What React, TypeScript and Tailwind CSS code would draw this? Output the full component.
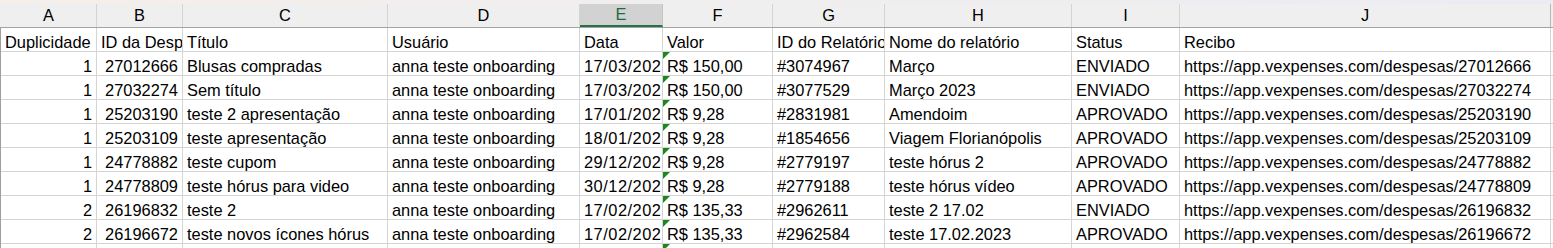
const cols = [
  { key: "A", w: "w-[96px]" },
  { key: "B", w: "w-[86px]" },
  { key: "C", w: "w-[205px]" },
  { key: "D", w: "w-[192px]" },
  { key: "E", w: "w-[83px]" },
  { key: "F", w: "w-[110px]" },
  { key: "G", w: "w-[112px]" },
  { key: "H", w: "w-[187px]" },
  { key: "I", w: "w-[108px]" },
  { key: "J", w: "w-[371px]" },
];

const header = [
  "Duplicidade",
  "ID da Despesa",
  "Título",
  "Usuário",
  "Data",
  "Valor",
  "ID do Relatório",
  "Nome do relatório",
  "Status",
  "Recibo",
];

const rows = [
  ["1", "27012666", "Blusas compradas", "17/03/2023", "R$ 150,00", "#3074967", "Março", "ENVIADO"],
  ["1", "27032274", "Sem título", "17/03/2023", "R$ 150,00", "#3077529", "Março 2023", "ENVIADO"],
  ["1", "25203190", "teste 2 apresentação", "17/01/2023", "R$ 9,28", "#2831981", "Amendoim", "APROVADO"],
  ["1", "25203109", "teste apresentação", "18/01/2023", "R$ 9,28", "#1854656", "Viagem Florianópolis", "APROVADO"],
  ["1", "24778882", "teste cupom", "29/12/2022", "R$ 9,28", "#2779197", "teste hórus 2", "APROVADO"],
  ["1", "24778809", "teste hórus para video", "30/12/2022", "R$ 9,28", "#2779188", "teste hórus vídeo", "APROVADO"],
  ["2", "26196832", "teste 2", "17/02/2023", "R$ 135,33", "#2962611", "teste 2 17.02", "ENVIADO"],
  ["2", "26196672", "teste novos ícones hórus", "17/02/2023", "R$ 135,33", "#2962584", "teste 17.02.2023", "APROVADO"],
];

function Cell({
  w,
  children,
  right,
  flag,
  extra = "",
}: {
  w: string;
  children?: React.ReactNode;
  right?: boolean;
  flag?: boolean;
  extra?: string;
}) {
  return (
    <div
      className={`relative h-full shrink-0 overflow-hidden whitespace-nowrap border-r border-[#d4d4d4] pt-[4px] leading-[20px] ${w} ${
        right ? "pr-[4px] text-right" : "pl-[4px]"
      } ${extra}`}
    >
      {flag && (
        <svg className="absolute left-0 top-0" width="7" height="7" viewBox="0 0 7 7">
          <polygon points="0,0 7,0 0,7" fill="#1a8a1a" />
        </svg>
      )}
      {children}
    </div>
  );
}

export default function App() {
  return (
    <div className="h-[248px] w-[1553px] overflow-hidden bg-white font-['Liberation_Sans',Arial,sans-serif] text-[16.4px] text-black">
      {/* top edge of the ribbon */}
      <div className="h-[4px] bg-gradient-to-r from-[#f5efeb] to-[#ebecf2]" />

      {/* column letters */}
      <div className="flex h-[24px] border-b border-[#a3a3a3] bg-[#efefef]">
        <div className="w-[1px] shrink-0" />
        {cols.map((c) => (
          <div
            key={c.key}
            className={`flex h-full shrink-0 items-center justify-center border-r ${c.w} ${
              c.key === "E"
                ? "border-[#c4c4c4] border-b-2 border-b-[#217346] bg-[#d2d2d2] text-[#1e6b41]"
                : c.key === "J"
                  ? "border-[#b5b5b5]"
                  : "border-[#d4d4d4]"
            }`}
          >
            {c.key}
          </div>
        ))}
        <div className="flex-1" />
      </div>

      {/* sheet body */}
      <div className="border-l border-[#9e9e9e]">
        <div className="flex h-[24px] border-b border-[#d4d4d4]">
          {cols.map((c, i) => (
            <Cell key={c.key} w={c.w}>
              {header[i]}
            </Cell>
          ))}
        </div>

        {rows.map((r) => (
          <div key={r[1]} className="flex h-[24px] border-b border-[#d4d4d4]">
            <Cell w={cols[0].w} right>
              {r[0]}
            </Cell>
            <Cell w={cols[1].w} right>
              {r[1]}
            </Cell>
            <Cell w={cols[2].w}>{r[2]}</Cell>
            <Cell w={cols[3].w}>anna teste onboarding</Cell>
            <Cell w={cols[4].w} extra="tracking-[0.5px]">
              {r[3]}
            </Cell>
            <Cell w={cols[5].w} flag>
              {r[4]}
            </Cell>
            <Cell w={cols[6].w}>{r[5]}</Cell>
            <Cell w={cols[7].w}>{r[6]}</Cell>
            <Cell w={cols[8].w}>{r[7]}</Cell>
            <Cell w={cols[9].w}>https://app.vexpenses.com/despesas/{r[1]}</Cell>
          </div>
        ))}

        <div className="flex h-[24px]">
          {cols.map((c) => (
            <Cell key={c.key} w={c.w} flag={c.key === "F"} />
          ))}
        </div>
      </div>
    </div>
  );
}
